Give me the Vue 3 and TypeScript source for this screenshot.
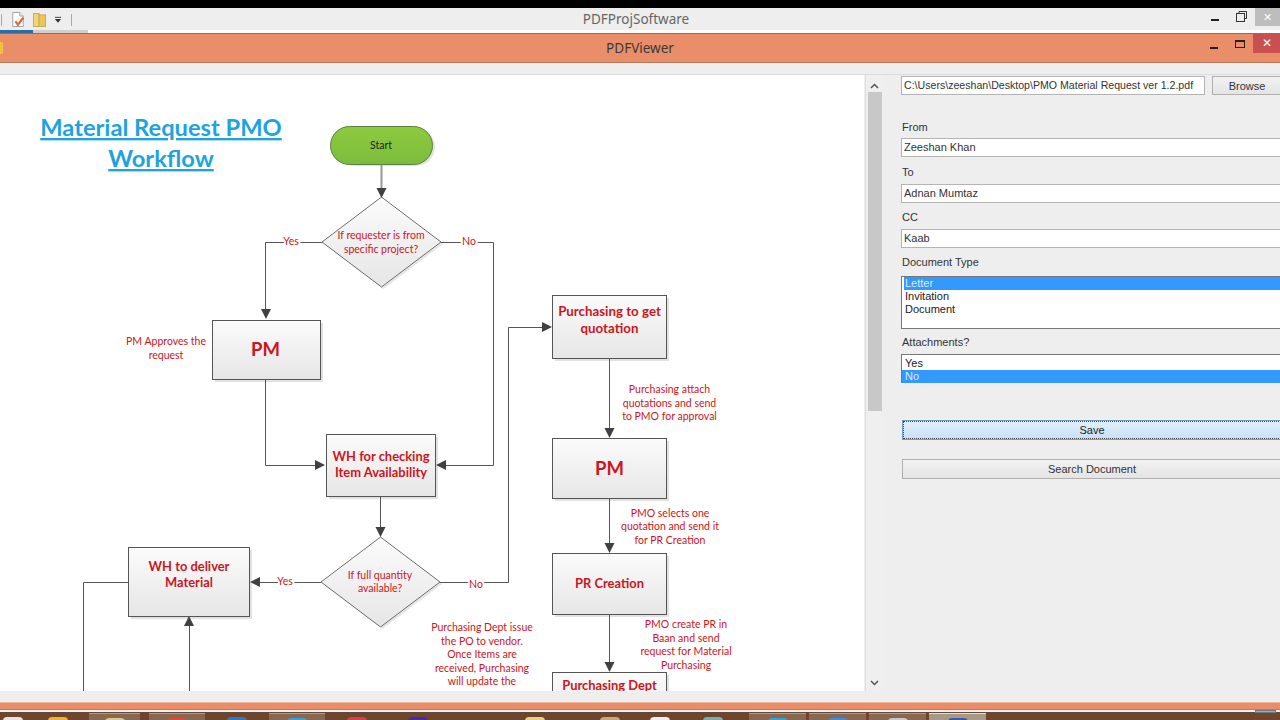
<template>
  <div class="screen">
    <div class="letterbox"></div>

    <!-- outer window title -->
    <div class="titlebar">
      <div class="quick">
        <span class="sep"></span>
        <svg class="doc-icon" width="14" height="17" viewBox="0 0 16 18">
          <path d="M2 1h8l4 4v12H2z" fill="#fff" stroke="#9a9a9a" />
          <path d="M10 1v4h4" fill="#eee" stroke="#9a9a9a" />
          <path d="M5 11l3 4 6-8" fill="none" stroke="#e0683a" stroke-width="2.4" />
        </svg>
        <svg width="13" height="16" viewBox="0 0 14 16">
          <rect x="0.5" y="1" width="6" height="14" fill="#f0d67a" stroke="#c9a94c" />
          <rect x="6.5" y="2.5" width="7" height="12.5" fill="#e9c65c" stroke="#c9a94c" />
        </svg>
        <svg width="8" height="8" viewBox="0 0 9 8">
          <path d="M1 1h7" stroke="#333" />
          <path d="M1 3h7L4.500 7z" fill="#333" />
        </svg>
        <span class="sep sep-end"></span>
      </div>
      <span class="title-outer">PDFProjSoftware</span>
      <div class="controls outer-controls">
        <span class="min-btn"></span>
        <svg class="restore" width="11" height="11" viewBox="0 0 11 11">
          <path d="M3 2.500V.5h7.500v7H8.500" fill="none" stroke="#333" />
          <rect x="0.500" y="2.500" width="8" height="8" fill="none" stroke="#333" />
        </svg>
        <span class="close-outer">✕</span>
      </div>
    </div>
    <div class="tabline">
      <span class="tab-blue"></span>
      <span class="tab-gray"></span>
    </div>

    <!-- inner window title -->
    <div class="viewer-bar">
      <span class="corner-icon"></span>
      <span class="title-inner">PDFViewer</span>
      <div class="controls inner-controls">
        <span class="min-btn"></span>
        <span class="max-btn"></span>
        <span class="close-inner">✕</span>
      </div>
    </div>

    <div class="gap-strip"></div>

    <div class="main">
      <div class="pdf-pane">
        <svg class="chart" width="864" height="616" viewBox="0 75 864 616">
          <defs>
            <linearGradient id="boxFill" x1="0" y1="0" x2="0" y2="1">
              <stop offset="0" stop-color="#fbfbfb" />
              <stop offset="1" stop-color="#e6e6e6" />
            </linearGradient>
            <linearGradient id="startFill" x1="0" y1="0" x2="0" y2="1">
              <stop offset="0" stop-color="#8ccb3f" />
              <stop offset="1" stop-color="#7cbc3c" />
            </linearGradient>
          </defs>

          <text class="heading" x="161" y="136">Material Request PMO</text>
          <text class="heading" x="161" y="167">Workflow</text>

          <rect x="336" y="128" width="99" height="38" rx="19" fill="#e2e2e2" />
          <rect x="330.500" y="126.500" width="102" height="38" rx="19" fill="url(#startFill)" stroke="#5b7f42" />
          <text class="start-text" x="381" y="149">Start</text>

          <template v-for="d in diamonds" :key="d.cx">
            <path :d="diamondPath(d.cx + 2, d.cy + 2)" fill="#e6e6e6" />
            <path :d="diamondPath(d.cx, d.cy)" fill="url(#boxFill)" stroke="#6e6e6e" />
          </template>

          <template v-for="b in boxes" :key="b.y">
            <rect :x="b.x + 3" :y="b.y + 3" :width="b.w" :height="b.h" fill="#e2e2e2" />
            <rect :x="b.x + 0.5" :y="b.y + 0.5" :width="b.w" :height="b.h" fill="url(#boxFill)" stroke="#555" />
          </template>

          <path d="M381.500 165V190" class="conn thick" />
          <path v-for="(l, i) in lines" :key="'l' + i" :d="l" class="conn" />
          <path v-for="(a, i) in arrows" :key="'a' + i" :d="a" fill="#404040" />

          <text
            v-for="t in labels"
            :key="t.text + t.y"
            :class="t.cls"
            :x="t.x"
            :y="t.y"
          >{{ t.text }}</text>
        </svg>
      </div>

      <div class="scroll-track">
        <svg width="9" height="6" viewBox="0 0 9 6" class="chev"><path d="M1 5l3.500-3.500L8 5" fill="none" stroke="#555" stroke-width="1.500" /></svg>
        <div class="scroll-thumb"></div>
        <div class="scroll-rest"></div>
        <svg width="9" height="6" viewBox="0 0 9 6" class="chev"><path d="M1 1l3.500 3.500L8 1" fill="none" stroke="#555" stroke-width="1.500" /></svg>
      </div>

      <form class="side-panel" @submit.prevent>
        <div class="path-row">
          <div class="field path-field">C:\Users\zeeshan\Desktop\PMO Material Request ver 1.2.pdf</div>
          <button class="btn browse" type="button">Browse</button>
        </div>

        <label class="lbl lbl-from">From</label>
        <div class="field">Zeeshan Khan</div>
        <label class="lbl lbl-to">To</label>
        <div class="field">Adnan Mumtaz</div>
        <label class="lbl">CC</label>
        <div class="field">Kaab</div>

        <label class="lbl lbl-doc">Document Type</label>
        <div class="listbox doc-list">
          <div v-for="o in docTypes" :key="o" class="opt" :class="{ sel: o === 'Letter' }">{{ o }}</div>
        </div>

        <label class="lbl lbl-att">Attachments?</label>
        <div class="listbox att-list">
          <div v-for="o in attachOpts" :key="o" class="opt" :class="{ sel: o === 'No' }">{{ o }}</div>
        </div>

        <button class="btn save" type="button">Save</button>
        <button class="btn search" type="button">Search Document</button>
      </form>
    </div>

    <div class="bottom-strip"></div>
    <div class="orange-strip"></div>

    <div class="taskbar">
      <span
        v-for="(s, i) in taskItems"
        :key="i"
        class="task"
        :class="{ raised: s.raised, active: s.active }"
        :style="{ width: s.w + 'px' }"
      >
        <i v-if="s.color" :style="{ background: s.color }"></i>
      </span>
      <span class="tray-mark"></span>
    </div>
  </div>
</template>

<script setup lang="ts">
interface Box { x: number; y: number; w: number; h: number }
interface Label { text: string; x: number; y: number; cls: string }
interface TaskItem { w: number; color?: string; raised?: boolean; active?: boolean }

const docTypes = ['Letter', 'Invitation', 'Document']
const attachOpts = ['Yes', 'No']

const boxes: Box[] = [
  { x: 212, y: 320, w: 108, h: 59 },
  { x: 326, y: 434, w: 109, h: 62 },
  { x: 128, y: 547, w: 121, h: 69 },
  { x: 552, y: 295, w: 114, h: 63 },
  { x: 552, y: 438, w: 114, h: 60 },
  { x: 552, y: 553, w: 114, h: 61 },
  { x: 552, y: 672, w: 114, h: 60 },
]

const diamonds = [
  { cx: 381.5, cy: 242 },
  { cx: 380.5, cy: 582 },
]

function diamondPath(cx: number, cy: number) {
  return `M${cx} ${cy - 45}L${cx + 59.5} ${cy}L${cx} ${cy + 45}L${cx - 59.5} ${cy}Z`
}

const lines = [
  'M322 242.500H265.500V310',
  'M441 242.500H493.500V465.500H446',
  'M265.500 379V465.500H316',
  'M380.500 496V528',
  'M321 582.500H260',
  'M440 582.500H508.500V327.500H543',
  'M128 582.500H83.500V691',
  'M189.500 691V626',
  'M609.500 359V428',
  'M609.500 499V543',
  'M609.500 614V662',
]

function down(x: number, tip: number) { return `M${x - 5} ${tip - 10}H${x + 5}L${x} ${tip}Z` }
function right(tip: number, y: number) { return `M${tip - 10} ${y - 5}V${y + 5}L${tip} ${y}Z` }
function left(tip: number, y: number) { return `M${tip + 10} ${y - 5}V${y + 5}L${tip} ${y}Z` }

const arrows = [
  down(381.5, 198),
  down(266, 319),
  right(325, 465),
  left(436, 465),
  down(380.5, 537),
  left(250, 582),
  `M184 626H194L189 616Z`,
  right(552, 327),
  down(609.5, 438),
  down(609.5, 553),
  down(609.5, 672),
]

const labels: Label[] = [
  { text: 'If requester is from', x: 381, y: 239, cls: 'small' },
  { text: 'specific project?', x: 381, y: 253, cls: 'small' },
  { text: 'Yes', x: 291, y: 245, cls: 'small knock' },
  { text: 'No', x: 469, y: 245, cls: 'small knock' },
  { text: 'PM Approves the', x: 166, y: 345, cls: 'small' },
  { text: 'request', x: 166, y: 359, cls: 'small' },
  { text: 'PM', x: 265.5, y: 356, cls: 'big' },
  { text: 'WH for checking', x: 381, y: 461, cls: 'mid' },
  { text: 'Item Availability', x: 381, y: 477, cls: 'mid' },
  { text: 'If full quantity', x: 380, y: 579, cls: 'small' },
  { text: 'available?', x: 380, y: 592, cls: 'small' },
  { text: 'Yes', x: 285, y: 585, cls: 'small knock' },
  { text: 'No', x: 476, y: 588, cls: 'small knock' },
  { text: 'WH to deliver', x: 189, y: 571, cls: 'mid' },
  { text: 'Material', x: 189, y: 587, cls: 'mid' },
  { text: 'Purchasing to get', x: 609.5, y: 316, cls: 'mid wide' },
  { text: 'quotation', x: 609.5, y: 333, cls: 'mid wide' },
  { text: 'Purchasing attach', x: 669.5, y: 393, cls: 'small' },
  { text: 'quotations and send', x: 669.5, y: 407, cls: 'small' },
  { text: 'to PMO for approval', x: 669.5, y: 420, cls: 'small' },
  { text: 'PM', x: 609.5, y: 475, cls: 'big' },
  { text: 'PMO selects one', x: 670, y: 517, cls: 'small' },
  { text: 'quotation and send it', x: 670, y: 530, cls: 'small' },
  { text: 'for PR Creation', x: 670, y: 544, cls: 'small' },
  { text: 'PR Creation', x: 609.5, y: 588, cls: 'mid' },
  { text: 'PMO create PR in', x: 686, y: 628, cls: 'small' },
  { text: 'Baan and send', x: 686, y: 642, cls: 'small' },
  { text: 'request for Material', x: 686, y: 655, cls: 'small' },
  { text: 'Purchasing', x: 686, y: 669, cls: 'small' },
  { text: 'Purchasing Dept issue', x: 482, y: 631, cls: 'small' },
  { text: 'the PO to vendor.', x: 482, y: 645, cls: 'small' },
  { text: 'Once Items are', x: 482, y: 658, cls: 'small' },
  { text: 'received, Purchasing', x: 482, y: 672, cls: 'small' },
  { text: 'will update the', x: 482, y: 685, cls: 'small' },
  { text: 'Purchasing Dept', x: 609.5, y: 690, cls: 'mid' },
]

const taskItems: TaskItem[] = [
  { w: 26, color: '#e8e4dc' },
  { w: 63, color: '#e8b830' },
  { w: 51, color: '#d8c898', raised: true },
  { w: 9 },
  { w: 56, color: '#d84a3c', raised: true },
  { w: 64, color: '#2f78c8' },
  { w: 56, color: '#3aa0d8', raised: true },
  { w: 63, color: '#d84050' },
  { w: 59, color: '#4a2ab0' },
  { w: 33 },
  { w: 110, color: '#e8d080' },
  { w: 40, color: '#c8a878' },
  { w: 60, color: '#eeeeee' },
  { w: 46, color: '#78b0a8' },
  { w: 13 },
  { w: 57, color: '#3aa0d8', raised: true },
  { w: 3 },
  { w: 57, color: '#3a8ee0', raised: true },
  { w: 3 },
  { w: 57, color: '#c8c8c8', raised: true },
  { w: 3 },
  { w: 57, color: '#3c5a9c', active: true },
]
</script>

<style>
html, body { margin: 0; background: #000; overflow: hidden; }
</style>

<style scoped>
.screen {
  width: 1280px; height: 720px;
  display: flex; flex-direction: column;
  overflow: hidden;
  background: #efefef;
  font-family: "Noto Sans", "Open Sans", sans-serif;
}
.letterbox { height: 8px; background: #000; flex: none; }

/* outer title */
.titlebar {
  height: 22px; flex: none;
  background: #eeeeee;
  position: relative;
  display: flex; align-items: center; justify-content: center;
}
.quick {
  position: absolute; left: 1px; top: 3px;
  display: flex; align-items: center; gap: 8px;
}
.sep { width: 1px; height: 12px; background: #aaa; }
.sep-end { margin-left: 1px; }
.doc-icon { margin-left: 1px; }
.title-outer { font-size: 13.5px; color: #666; margin-left: -8px; }
.controls { position: absolute; right: 0; top: 0; display: flex; align-items: flex-start; }
.min-btn { width: 8px; height: 2px; background: #222; }
.outer-controls .min-btn { margin: 11px 17px 0 0; }
.restore { margin: 3px 8px 0 0; }
.close-outer {
  width: 25px; height: 18px;
  background: #bdbdbd; color: #fff;
  font-size: 11px; line-height: 17px; text-align: center;
}
.tabline { height: 3px; flex: none; background: #fff; display: flex; }
.tab-blue { width: 33px; background: #2b6ca8; }
.tab-gray { width: 55px; background: #cfcfcf; }

/* inner title */
.viewer-bar {
  height: 30px; flex: none;
  background: #e98e68;
  border-top: 1px solid #a8664c;
  border-bottom: 1px solid #b9775a;
  box-sizing: border-box;
  position: relative;
  display: flex; align-items: center; justify-content: center;
}
.corner-icon {
  position: absolute; left: 0; top: 8px;
  width: 3px; height: 12px;
  background: #f0c040;
}
.title-inner { font-size: 13.5px; color: #3a3a3a; }
.inner-controls .min-btn { margin: 13px 17px 0 0; }
.max-btn { width: 8px; height: 5px; border: 1px solid #222; border-top-width: 2px; margin: 6px 8px 0 0; }
.close-inner {
  width: 27px; height: 19px;
  background: #c85050; color: #fff;
  font-size: 12px; line-height: 18px; text-align: center;
}
.gap-strip { height: 12px; flex: none; background: #eeeeee; border-bottom: 1px solid #dcdcdc; box-sizing: border-box; }

/* main */
.main { height: 616px; flex: none; display: flex; }
.pdf-pane { width: 864px; flex: none; background: #fff; overflow: hidden; }
.chart { display: block; }
.conn { fill: none; stroke: #555; stroke-width: 1; }
.conn.thick { stroke: #999; stroke-width: 2; }

.chart text { text-anchor: middle; font-family: Lato, "Open Sans", sans-serif; fill: #cf1420; }
.chart .heading { font-size: 23.7px; font-weight: 700; fill: #1ea3e0; text-decoration: underline; }
.chart .start-text { font-size: 10.500px; fill: #222; }
.chart .small { font-size: 10.500px; }
.chart .mid { font-size: 12.900px; font-weight: 700; }
.chart .mid.wide { font-size: 13.300px; }
.chart .big { font-size: 18.500px; font-weight: 700; }
.chart .knock { paint-order: stroke; stroke: #fff; stroke-width: 4px; }

.scroll-track {
  width: 18px; flex: none;
  margin-left: 1px;
  background: #efefef;
  display: flex; flex-direction: column; align-items: center;
  padding-top: 8px; padding-bottom: 5px;
  box-sizing: border-box;
  border-left: 1px solid #dedede;
}
.chev { flex: none; }
.scroll-thumb { width: 14px; height: 319px; background: #c8c8c8; margin-top: 3px; flex: none; }
.scroll-rest { flex: 1; }

.side-panel {
  flex: 1; min-width: 0;
  padding: 1px 0 0 18px;
  display: flex; flex-direction: column;
  background: #eeeeee;
  font-family: "Liberation Sans", Arial, sans-serif;
  font-size: 11px; color: #333;
  overflow: hidden;
}
.path-row { display: flex; gap: 7px; margin-right: -2px; }
.field {
  height: 19px; box-sizing: border-box; flex: none;
  margin-right: -2px;
  background: #fff; border: 1px solid #b4b4b4;
  padding: 0 2px; line-height: 17px; white-space: nowrap;
  color: #333;
}
.path-field { width: 304px; margin-right: 0; font-size: 10.6px; }
.lbl { height: 13px; line-height: 13px; padding-left: 1px; margin: 8px 0 5px; display: block; flex: none; }
.lbl-from { margin: 26px 0 4px; }
.lbl-to { margin: 9px 0 5px; }
.lbl-doc { margin-bottom: 7px; }
.lbl-att { margin: 7px 0 5px; }
.btn {
  font: inherit; color: #333; padding: 0;
  background: linear-gradient(#f2f2f2, #e4e4e4);
  border: 1px solid #b0b0b0;
  height: 19px; box-sizing: border-box;
}
.browse { flex: 1; }
.listbox {
  background: #fff; border: 1px solid #777;
  box-sizing: border-box; margin-right: -2px; flex: none;
  color: #222;
}
.doc-list { height: 53px; padding: 0 0 0 2px; }
.att-list { height: 29px; padding: 1.5px 0 0 0; }
.opt { height: 13px; line-height: 13px; padding-left: 1px; }
.att-list .opt { padding-left: 3px; }
.opt.sel { background: #3399ff; color: #dcecff; }
.save, .search { margin-right: -2px; margin-left: 1px; flex: none; }
.save {
  height: 20px; margin-top: 37px;
  background: linear-gradient(#e4f0fb, #c6dff7);
  border: 1px solid #6ea0c8;
  outline: 1px dotted #444; outline-offset: -2px;
  color: #222;
}
.search { margin-top: 19px; height: 20px; }

.bottom-strip { height: 11px; flex: none; background: #eeeeee; }
.orange-strip {
  height: 10px; flex: none;
  background: #e98e68;
  border-top: 1px solid #f0b8a0;
  border-bottom: 2px solid #f6f0ea;
  box-shadow: inset 0 -1px 0 #c07a5a;
  box-sizing: border-box;
}
.taskbar {
  flex: 1; position: relative;
  background: #70452b;
  border-top: 1px solid #5e4a3c;
  display: flex; align-items: flex-start;
  overflow: visible;
}
.task { display: flex; justify-content: center; height: 7px; box-sizing: border-box; flex: none; }
.task i { display: block; width: 20px; height: 4px; margin-top: 4px; border-radius: 6px 6px 0 0; }
.task.raised { background: #8a6850; border-top: 1px solid #b09a88; }
.task.active { background: #a89888; border-top: 1px solid #ddd; }
.tray-mark {
  position: absolute; right: 4px; top: -3px;
  width: 21px; height: 3px;
  background: #8fb0c0; border: 1px solid #6a7a80; box-sizing: border-box;
}
</style>
